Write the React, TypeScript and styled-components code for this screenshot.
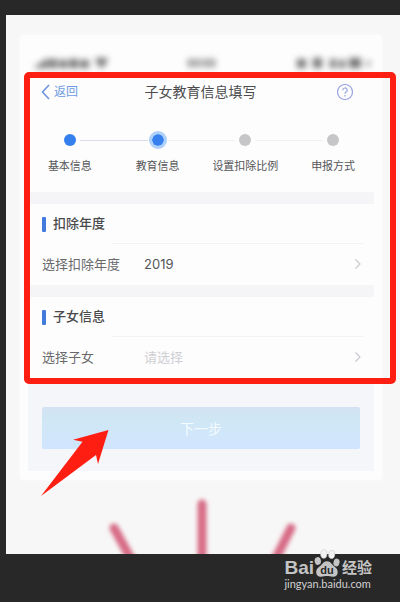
import React from "react";
import styled, { createGlobalStyle, css } from "styled-components";

const GlobalStyle = createGlobalStyle`
  *, *::before, *::after { box-sizing: border-box; }
  body {
    margin: 0;
    background: #282828;
    font-family: Roboto, "Noto Sans CJK SC", sans-serif;
    color: #4a4a4c;
  }
  button { font: inherit; color: inherit; border: 0; background: none; padding: 0; cursor: pointer; }
`;

const Page = styled.div`
  padding: 15px 0 0 6px;
`;

const Screen = styled.main`
  background: #f7f7f7;
  padding-top: 20px;
`;

const Card = styled.article`
  margin: 0 18px 0 14px;
  padding: 10px 8px 9px;
  background: #fdfdfe;
  border-radius: 4px;
  box-shadow: 0 0 4px #fcfcfd;
`;

const StatusBar = styled.div`
  display: flex;
  justify-content: space-between;
  align-items: center;
  height: 30px;
  padding: 5px 0 0 4px;
`;

const StatusGlyphs = styled.svg`
  display: block;
  filter: blur(3px);
`;

const Highlight = styled.div`
  position: relative;

  &::after {
    content: "";
    position: absolute;
    inset: -3px -22px -6px -4px;
    border: 6px solid #ff1e12;
    border-radius: 5px;
    pointer-events: none;
  }
`;

const NavBar = styled.header`
  display: grid;
  grid-template-columns: 1fr auto 1fr;
  align-items: center;
  height: 34px;
  padding: 0 20px 0 13px;
`;

const BackButton = styled.button`
  display: flex;
  align-items: center;
  gap: 4px;
  justify-self: start;
  font-size: 12px;
  line-height: 18px;
  color: #6c9ade;
`;

const Title = styled.h1`
  margin: 0;
  padding-left: 6px;
  font-size: 14px;
  line-height: 20px;
  font-weight: 400;
  color: #4c4c4e;
`;

const HelpButton = styled.button`
  display: flex;
  justify-self: end;
`;

const Steps = styled.ol`
  display: grid;
  grid-template-columns: repeat(4, 1fr);
  list-style: none;
  margin: 0 -3px 0 -2px;
  padding: 22px 0 17px;
`;

type StepState = "done" | "current" | "todo";

const Step = styled.li<{ $state: StepState }>`
  display: flex;
  flex-direction: column;
  align-items: center;
  gap: 10px;
  position: relative;
  font-size: 11px;
  line-height: 16px;
  white-space: nowrap;
  color: #555557;

  &:not(:last-child)::after {
    content: "";
    position: absolute;
    top: 9px;
    left: calc(50% + 10px);
    width: calc(100% - 20px);
    height: 1px;
    background: ${(p) => (p.$state === "done" ? "#dcdfe6" : "#f0f1f6")};
  }
`;

const Dot = styled.span<{ $state: StepState }>`
  width: 18px;
  height: 18px;
  border: 3px solid transparent;
  border-radius: 50%;
  background: ${(p) => (p.$state === "todo" ? "#c6c6c8" : "#3680ee")};
  background-clip: padding-box;
  ${(p) =>
    p.$state === "current" &&
    css`
      border-color: #acd0f9;
    `}
`;

const Section = styled.section`
  border-top: 12px solid #f5f5f8;
`;

const SectionTitle = styled.h2`
  display: flex;
  align-items: center;
  gap: 7px;
  height: 39px;
  margin: 0;
  padding: 1px 0 0 14px;
  font-size: 13px;
  line-height: 18px;
  font-weight: 500;
  color: #4a4a4c;

  &::before {
    content: "";
    width: 4px;
    height: 15px;
    border-radius: 1px;
    background: #437bdc;
  }
`;

const FieldRow = styled.button`
  display: grid;
  grid-template-columns: 102px 1fr auto;
  align-items: center;
  width: 100%;
  height: 42px;
  padding: 0 12px 0 14px;
  text-align: left;
  font-family: Inter, "Noto Sans CJK SC", sans-serif;
  font-size: 13px;
  line-height: 20px;
  background: linear-gradient(#f2f2f6, #f2f2f6) 84px 0 / calc(100% - 95px) 1px no-repeat;
`;

const FieldLabel = styled.span`
  color: #69696b;
`;

const FieldValue = styled.span<{ $placeholder?: boolean }>`
  color: ${(p) => (p.$placeholder ? "#cfcfd3" : "#555557")};
`;

const ActionArea = styled.div`
  padding: 29px 14px 22px;
  background: #f5f6fa;
`;

const NextButton = styled.button`
  display: block;
  width: 100%;
  height: 42px;
  border-radius: 2px;
  background: linear-gradient(#d3e2f3, #cfe7f5 30%, #d1e6fb 75%, #cfe5ff);
  color: #f3fbff;
  font-size: 14px;
`;

const Rays = styled.svg`
  display: block;
  margin: 0 auto;
`;

const Arrow = styled.svg`
  position: absolute;
  left: 13px;
  bottom: -26px;
  pointer-events: none;
`;

const CardBody = styled.div`
  position: relative;
`;

const Footer = styled.footer`
  display: flex;
  justify-content: flex-end;
  height: 48px;
  padding-right: 28px;
`;

const Brand = styled.a`
  position: relative;
  display: flex;
  flex-direction: column;
  margin-top: -6px;
  color: #c4c4c4;
  text-decoration: none;
`;

const BrandName = styled.span`
  display: flex;
  align-items: flex-end;
  height: 29px;
  font-family: "Liberation Sans", "Noto Sans CJK SC", sans-serif;
  font-weight: 700;
  font-size: 19px;
  line-height: 18px;
`;

const BrandSuffix = styled.span`
  margin-left: 2px;
  font-size: 15px;
`;

const BrandUrl = styled.span`
  font-family: Lato, sans-serif;
  font-size: 11px;
  line-height: 14px;
  color: #d0d0d0;
`;

const Chevron = () => (
  <svg width="8" height="12" viewBox="0 0 8 12" fill="none" stroke="#c9c9cf" strokeWidth="1.2" aria-hidden="true">
    <path d="M1.5 1.5 6 6l-4.5 4.5" />
  </svg>
);

const Paw = () => (
  <svg width="26" height="28" viewBox="0 0 26 28" aria-hidden="true">
    <g fill="#c4c4c4">
      <ellipse cx="3.8" cy="12" rx="3.1" ry="3.9" transform="rotate(-12 3.8 12)" />
      <ellipse cx="22.5" cy="13.5" rx="3" ry="4" transform="rotate(15 22.5 13.5)" />
      <path d="M13 12.2c2.6 0 4 1.7 5.5 3.6 1.8 2.3 5.2 3.4 5.2 7.2 0 3.3-2.3 4.8-5 4.8-2 0-3.6-.7-5.7-.7s-3.9.7-5.8.7c-2.7 0-5-1.5-5-4.8 0-3.8 3.5-4.9 5.3-7.2C9 13.9 10.4 12.2 13 12.2z" />
    </g>
    <g fill="#f4f4f4" stroke="#d3d3d3" strokeWidth=".7">
      <ellipse cx="9.8" cy="5" rx="3.1" ry="4.2" />
      <ellipse cx="17.7" cy="5.5" rx="3" ry="4.1" transform="rotate(8 17.7 5.5)" />
    </g>
    <text x="13" y="25" textAnchor="middle" fontFamily="Liberation Sans, sans-serif" fontWeight="700" fontSize="11" fill="#282828">
      du
    </text>
  </svg>
);

const steps: { label: string; state: StepState }[] = [
  { label: "基本信息", state: "done" },
  { label: "教育信息", state: "current" },
  { label: "设置扣除比例", state: "todo" },
  { label: "申报方式", state: "todo" },
];

const fields = [
  { heading: "扣除年度", label: "选择扣除年度", value: "2019", empty: false },
  { heading: "子女信息", label: "选择子女", value: "请选择", empty: true },
];

export default function App() {
  return (
    <>
      <GlobalStyle />
      <Page>
        <Screen>
          <Card>
            <StatusBar aria-hidden="true">
              <StatusGlyphs width="78" height="14" viewBox="0 0 78 14" fill="#747474">
                <path d="M1 12 16 2v10zM17 3h8v9h-8zM27 4h8v8h-8zM37 3h9v9h-9zM48 4h9v8h-9zM63 2h13l-4 9h-5z" />
              </StatusGlyphs>
              <StatusGlyphs width="30" height="14" viewBox="0 0 30 14" fill="#8a8a8a">
                <path d="M1 3h5v8H1zM8 3h5v8H8zM16 3h5v8h-5zM23 3h5v8h-5z" />
              </StatusGlyphs>
              <StatusGlyphs width="80" height="14" viewBox="0 0 80 14" fill="#727272">
                <path d="M3 3h9v9H3zM19 2h9v10h-9zM36 3h6v9h-6zM45 4h6v8h-6zM55 2h12v10H55zM73 5h3v5h-3z" />
              </StatusGlyphs>
            </StatusBar>
            <CardBody>
              <Highlight>
                <NavBar>
                  <BackButton type="button">
                    <svg width="9" height="16" viewBox="0 0 9 16" fill="none" stroke="#6d94dc" strokeWidth="1.6" aria-hidden="true">
                      <path d="M8 1 1.5 8 8 15" />
                    </svg>
                    返回
                  </BackButton>
                  <Title>子女教育信息填写</Title>
                  <HelpButton type="button" aria-label="帮助">
                    <svg width="18" height="18" viewBox="0 0 18 18" fill="none" stroke="#98a2df" strokeWidth="1.2" aria-hidden="true">
                      <circle cx="9" cy="9" r="7.5" />
                      <path d="M6.8 7.2a2.2 2.2 0 1 1 3.3 1.9c-.8.5-1.1.8-1.1 1.7M9 12v1.4" />
                    </svg>
                  </HelpButton>
                </NavBar>
                <Steps>
                  {steps.map((s) => (
                    <Step key={s.label} $state={s.state} aria-current={s.state === "current" ? "step" : undefined}>
                      <Dot $state={s.state} />
                      {s.label}
                    </Step>
                  ))}
                </Steps>
                {fields.map((f) => (
                  <Section key={f.heading}>
                    <SectionTitle>{f.heading}</SectionTitle>
                    <FieldRow type="button">
                      <FieldLabel>{f.label}</FieldLabel>
                      <FieldValue $placeholder={f.empty}>{f.value}</FieldValue>
                      <Chevron />
                    </FieldRow>
                  </Section>
                ))}
              </Highlight>
              <ActionArea>
                <NextButton type="button">下一步</NextButton>
              </ActionArea>
              <Arrow width="68" height="68" viewBox="0 0 68 68" fill="#ff1e12" aria-hidden="true">
                <path d="M67.5 1 32 10.7l9.5 2L0 67l55-41 2 9z" />
              </Arrow>
            </CardBody>
          </Card>
          <Rays width="220" height="74" viewBox="0 0 220 74" aria-hidden="true">
            <defs>
              <filter id="soft" x="-20%" y="-20%" width="140%" height="140%">
                <feGaussianBlur stdDeviation="2" />
              </filter>
            </defs>
            <g stroke="#d76c86" strokeWidth="9" strokeLinecap="round" filter="url(#soft)">
              <path d="M21 48 43 88M109 24v62M198 48 178 88" />
            </g>
          </Rays>
        </Screen>
        <Footer>
          <Brand href="#" aria-label="Baidu 经验">
            <BrandName>
              Bai
              <Paw />
              <BrandSuffix>经验</BrandSuffix>
            </BrandName>
            <BrandUrl>jingyan.baidu.com</BrandUrl>
          </Brand>
        </Footer>
      </Page>
    </>
  );
}
